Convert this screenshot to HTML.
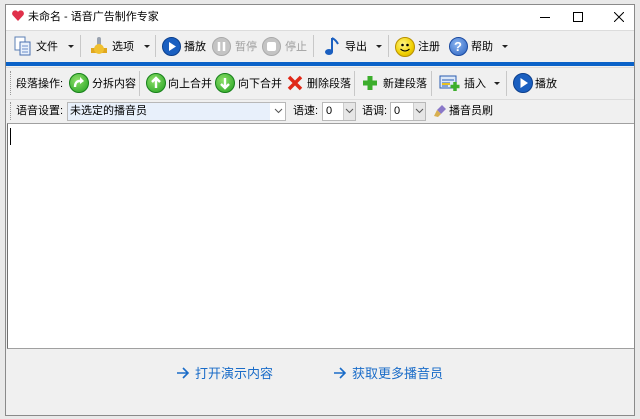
<!DOCTYPE html>
<html><head><meta charset="utf-8"><style>
*{margin:0;padding:0;box-sizing:border-box}
body{width:640px;height:419px;background:#e9e9e9;position:relative;overflow:hidden;font-family:"Liberation Sans","Noto Sans CJK SC",sans-serif;font-size:11px;color:#000}
.a{position:absolute}
.win{left:5px;top:4px;width:630px;height:412px;background:#f0f0f0;border:1px solid #8a8a8a}
.t{position:absolute;white-space:nowrap;font-size:11px;line-height:12px}
.sep{position:absolute;width:1px;background:#c8c8c8}
.dd{position:absolute;width:0;height:0;border-left:3px solid transparent;border-right:3px solid transparent;border-top:3px solid #222}
.ci{position:absolute;border-radius:50%}
</style></head><body>
<div class="a win"></div>
<div class="a" style="left:6px;top:5px;width:628px;height:25px;background:#fff"></div>
<svg class="a" style="left:11px;top:10px" width="14" height="12" viewBox="0 0 14 12"><path d="M7 11 L1.5 5 A3 3 0 0 1 7 2 A3 3 0 0 1 12.5 5 Z" fill="#e0304a"/></svg>
<div class="t" style="left:28px;top:11px;font-size:11px">未命名 - 语音广告制作专家</div>
<div class="a" style="left:540px;top:17px;width:10px;height:1px;background:#000"></div>
<div class="a" style="left:573px;top:12px;width:10px;height:10px;border:1px solid #000"></div>
<svg class="a" style="left:614px;top:12px" width="10" height="10"><path d="M0 0L10 10M10 0L0 10" stroke="#000" stroke-width="1"/></svg>
<div class="a" style="left:6px;top:30px;width:628px;height:32px;background:#f0f0f0;border-top:1px solid #dcdcdc"></div>
<svg class="a" style="left:14px;top:36px" width="18" height="20"><rect x="1" y="1" width="10" height="13" fill="#fff" stroke="#5b7fb5"/><rect x="6" y="6" width="10" height="13" fill="#e8f0fb" stroke="#4a70b0"/><path d="M8 10h6M8 13h6M8 16h6" stroke="#6a8cc8"/></svg>
<div class="t" style="left:36px;top:41px">文件</div><div class="dd" style="left:68px;top:45px"></div>
<div class="sep" style="left:80px;top:35px;height:22px"></div>
<svg class="a" style="left:89px;top:35px" width="20" height="21"><rect x="8" y="2" width="4" height="10" rx="2" fill="#9aa3b0"/><path d="M2 13h16v5H2z" fill="#e0a820"/><circle cx="10" cy="14" r="5" fill="#f0c030"/></svg>
<div class="t" style="left:112px;top:41px">选项</div><div class="dd" style="left:144px;top:45px"></div>
<div class="sep" style="left:155px;top:35px;height:22px"></div>
<div class="ci" style="left:162px;top:37px;width:19px;height:19px;background:#1a5fc0;border:1px solid #0c3f8c"></div>
<svg class="a" style="left:162px;top:37px" width="19" height="19"><path d="M7 5L14 9.5L7 14Z" fill="#fff"/></svg>
<div class="t" style="left:184px;top:41px">播放</div>
<div class="ci" style="left:212px;top:37px;width:19px;height:19px;background:#c4c4c4;border:1px solid #aaa"></div>
<svg class="a" style="left:212px;top:37px" width="19" height="19"><path d="M7 5v9M12 5v9" stroke="#fff" stroke-width="2.5"/></svg>
<div class="t" style="left:235px;top:41px;color:#a0a0a0">暂停</div>
<div class="ci" style="left:262px;top:37px;width:19px;height:19px;background:#c4c4c4;border:1px solid #aaa"></div>
<div class="a" style="left:267px;top:42px;width:9px;height:9px;background:#fff;border-radius:2px"></div>
<div class="t" style="left:285px;top:41px;color:#a0a0a0">停止</div>
<div class="sep" style="left:313px;top:35px;height:22px"></div>
<svg class="a" style="left:322px;top:35px" width="18" height="22"><path d="M10 3v14" stroke="#1a5fc0" stroke-width="2"/><path d="M10 3q4 2 6 6" stroke="#1a5fc0" stroke-width="2" fill="none"/><ellipse cx="7" cy="17" rx="4" ry="3" fill="#1a5fc0"/></svg>
<div class="t" style="left:345px;top:41px">导出</div><div class="dd" style="left:376px;top:45px"></div>
<div class="sep" style="left:388px;top:35px;height:22px"></div>
<div class="ci" style="left:395px;top:37px;width:20px;height:20px;background:radial-gradient(circle at 40% 35%,#fff68a,#f0d000 60%,#c8a000);border:1px solid #b89000"></div>
<svg class="a" style="left:395px;top:37px" width="20" height="20"><circle cx="7.5" cy="8" r="1.3"/><circle cx="12.5" cy="8" r="1.3"/><path d="M5.5 12q4.5 4 9 0" stroke="#000" fill="none"/></svg>
<div class="t" style="left:418px;top:41px">注册</div>
<div class="ci" style="left:449px;top:37px;width:19px;height:19px;background:radial-gradient(circle at 40% 35%,#8ab4f0,#2a62c0);border:1px solid #1a4aa0"></div>
<div class="t" style="left:454px;top:39px;color:#fff;font-weight:bold;font-size:13px;line-height:15px">?</div>
<div class="t" style="left:471px;top:41px">帮助</div><div class="dd" style="left:502px;top:45px"></div>
<div class="a" style="left:6px;top:62px;width:628px;height:4px;background:#0a62c8"></div>
<div class="a" style="left:6px;top:67px;width:628px;height:1px;background:#dcdcdc"></div>
<div class="a" style="left:10px;top:71px;width:1px;height:24px;border-left:1px dotted #999"></div>
<div class="t" style="left:16px;top:78px">段落操作:</div>
<div class="ci" style="left:69px;top:73px;width:20px;height:20px;background:radial-gradient(circle at 40% 35%,#8ee06a,#22a020);border:1px solid #17801a"></div>
<svg class="a" style="left:69px;top:73px" width="20" height="20"><path d="M6 14q0-7 7-6" stroke="#fff" stroke-width="2.4" fill="none"/><path d="M11 4l4 4-4 3z" fill="#fff"/></svg>
<div class="t" style="left:92px;top:78px">分拆内容</div>
<div class="sep" style="left:139px;top:71px;height:25px"></div>
<div class="ci" style="left:146px;top:73px;width:20px;height:20px;background:radial-gradient(circle at 40% 35%,#8ee06a,#22a020);border:1px solid #17801a"></div>
<svg class="a" style="left:146px;top:73px" width="20" height="20"><path d="M10 15V6M6 9l4-4 4 4" stroke="#fff" stroke-width="2.4" fill="none"/></svg>
<div class="t" style="left:168px;top:78px">向上合并</div>
<div class="ci" style="left:215px;top:73px;width:20px;height:20px;background:radial-gradient(circle at 40% 35%,#8ee06a,#22a020);border:1px solid #17801a"></div>
<svg class="a" style="left:215px;top:73px" width="20" height="20"><path d="M10 5v9M6 11l4 4 4-4" stroke="#fff" stroke-width="2.4" fill="none"/></svg>
<div class="t" style="left:238px;top:78px">向下合并</div>
<svg class="a" style="left:287px;top:75px" width="16" height="16"><path d="M2 2L14 14M14 2L2 14" stroke="#e02818" stroke-width="3.5"/></svg>
<div class="t" style="left:307px;top:78px">删除段落</div>
<div class="sep" style="left:354px;top:71px;height:25px"></div>
<svg class="a" style="left:361px;top:74px" width="18" height="18"><path d="M9 2v14M2 9h14" stroke="#3cae2c" stroke-width="5"/></svg>
<div class="t" style="left:383px;top:78px">新建段落</div>
<div class="sep" style="left:431px;top:71px;height:25px"></div>
<svg class="a" style="left:439px;top:74px" width="22" height="18"><rect x="1" y="2" width="16" height="12" fill="#dce8f8" stroke="#2a5cb0"/><path d="M3 6h12M3 9h8M3 12h6" stroke="#2a5cb0"/><path d="M3 10h8" stroke="#e8c020" stroke-width="2"/><path d="M16 8v9M11.5 12.5h9" stroke="#3cae2c" stroke-width="3.5"/></svg>
<div class="t" style="left:464px;top:78px">插入</div><div class="dd" style="left:494px;top:82px"></div>
<div class="sep" style="left:506px;top:71px;height:25px"></div>
<div class="ci" style="left:513px;top:73px;width:20px;height:20px;background:#1a5fc0;border:1px solid #0c3f8c"></div>
<svg class="a" style="left:513px;top:73px" width="20" height="20"><path d="M7.5 5L15 10L7.5 15Z" fill="#fff"/></svg>
<div class="t" style="left:535px;top:78px">播放</div>
<div class="a" style="left:6px;top:99px;width:628px;height:1px;background:#dcdcdc"></div>
<div class="a" style="left:10px;top:102px;width:1px;height:18px;border-left:1px dotted #999"></div>
<div class="t" style="left:16px;top:105px">语音设置:</div>
<div class="a" style="left:67px;top:102px;width:219px;height:19px;background:#fff;border:1px solid #b8b8b8"></div>
<div class="a" style="left:68px;top:103px;width:202px;height:17px;background:#e8f0fb"></div>
<div class="t" style="left:70px;top:105px">未选定的播音员</div>
<svg class="a" style="left:274px;top:108px" width="9" height="6"><path d="M1 1l3.5 3.5L8 1" stroke="#555" fill="none"/></svg>
<div class="t" style="left:293px;top:105px">语速:</div>
<div class="a" style="left:322px;top:102px;width:34px;height:19px;background:#fff;border:1px solid #b8b8b8"></div>
<div class="t" style="left:326px;top:105px">0</div>
<div class="a" style="left:343px;top:103px;width:12px;height:17px;background:#e6e6e6;border-left:1px solid #ccc"></div>
<svg class="a" style="left:345px;top:108px" width="9" height="6"><path d="M1 1l3.5 3.5L8 1" stroke="#555" fill="none"/></svg>
<div class="t" style="left:362px;top:105px">语调:</div>
<div class="a" style="left:390px;top:102px;width:36px;height:19px;background:#fff;border:1px solid #b8b8b8"></div>
<div class="t" style="left:394px;top:105px">0</div>
<div class="a" style="left:413px;top:103px;width:12px;height:17px;background:#e6e6e6;border-left:1px solid #ccc"></div>
<svg class="a" style="left:415px;top:108px" width="9" height="6"><path d="M1 1l3.5 3.5L8 1" stroke="#555" fill="none"/></svg>
<svg class="a" style="left:433px;top:104px" width="14" height="14"><path d="M9 1l4 4-5 5-4-4z" fill="#8a78c8"/><path d="M4 6l4 4-3 3-4-1z" fill="#d8b050"/></svg>
<div class="t" style="left:449px;top:105px">播音员刷</div>
<div class="a" style="left:7px;top:123px;width:627px;height:226px;background:#fff;border-top:1px solid #a0a0a0;border-left:1px solid #707070;border-bottom:1px solid #a0a0a0"></div>
<div class="a" style="left:10px;top:128px;width:1px;height:17px;background:#000"></div>
<svg class="a" style="left:176px;top:367px" width="14" height="12"><path d="M1 6h11M7 1l5 5-5 5" stroke="#1a6cc8" stroke-width="1.6" fill="none"/></svg>
<div class="t" style="left:195px;top:366px;font-size:13px;line-height:16px;color:#1a6cc8">打开演示内容</div>
<svg class="a" style="left:333px;top:367px" width="14" height="12"><path d="M1 6h11M7 1l5 5-5 5" stroke="#1a6cc8" stroke-width="1.6" fill="none"/></svg>
<div class="t" style="left:352px;top:366px;font-size:13px;line-height:16px;color:#1a6cc8">获取更多播音员</div>
</body></html>
